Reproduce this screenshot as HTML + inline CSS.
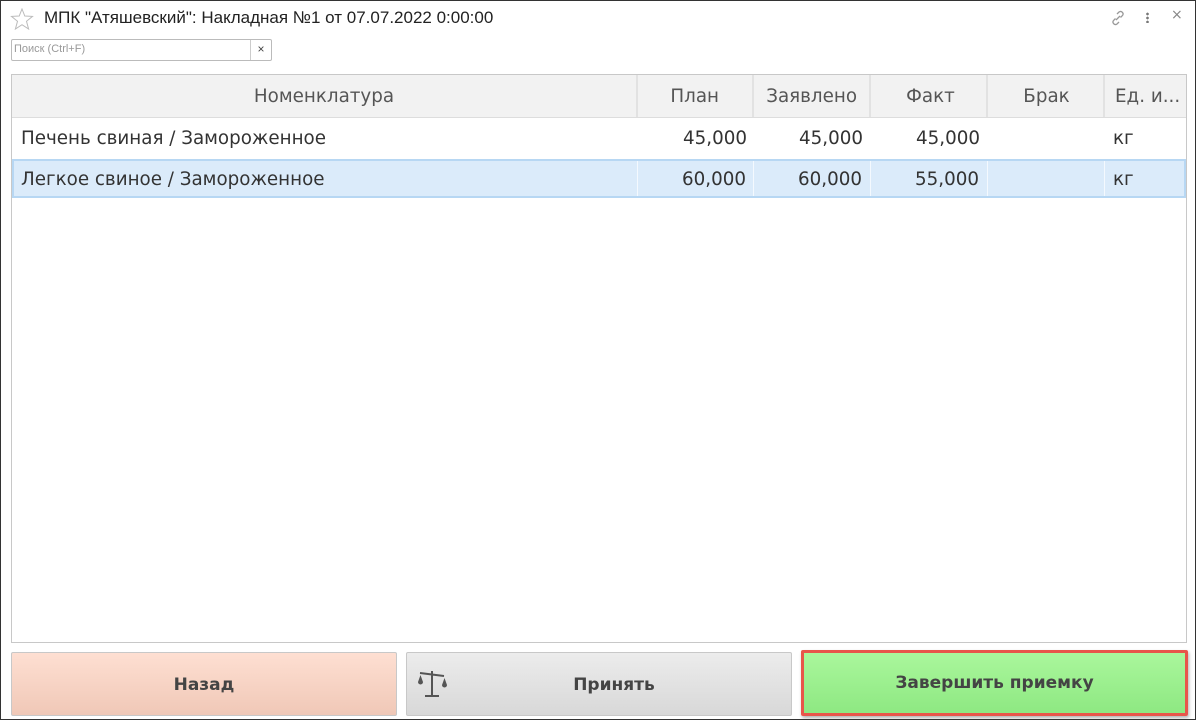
<!DOCTYPE html>
<html><head><meta charset="utf-8"><style>
*{box-sizing:border-box;margin:0;padding:0}
body{width:1196px;height:720px;background:#fff;position:relative;overflow:hidden;font-family:"DejaVu Sans","Liberation Sans",sans-serif}
.frame{position:absolute;left:0;top:0;width:1196px;height:720px;border:1px solid #333;pointer-events:none}
.title{position:absolute;left:44px;top:8px;font:17px "Liberation Sans",sans-serif;color:#222}
.search{position:absolute;left:11px;top:39px;width:261px;height:22px;border:1px solid #bbb;border-radius:2px;font:11px "Liberation Sans",sans-serif;color:#999;padding:3px 2px}
.search .x{position:absolute;right:0;top:0;width:21px;height:20px;border-left:1px solid #ccc;color:#444;text-align:center;font-size:12px;line-height:19px}
.tbl{position:absolute;left:11px;top:74px;width:1176px;height:569px;border:1px solid #c8c8c8}
.row{position:absolute;left:0;width:1174px}
.c{position:absolute;top:0;height:100%;font-size:18.3px;white-space:nowrap}
.hdr{top:0;height:43px;background:#f2f2f2;border-bottom:1px solid #ddd;color:#555}
.hdr .c{border-right:2px solid #e2e2e2;line-height:43px}
.r1{top:43px;height:41px;color:#333}
.r2{top:84px;height:39px;background:#dbebfa;border:2px solid #b7d7f3;color:#333;left:0}
.r2 .c{border-right:1px solid #f4f9fe}
.c{line-height:42px}
.btn{position:absolute;top:652px;height:64px;border:1px solid #c8c8c8;border-radius:2px;font-weight:bold;font-size:17px;color:#444;text-align:center;line-height:64px}
</style></head><body>
<svg style="position:absolute;left:10px;top:8px" width="24" height="22" viewBox="0 0 24 22"><polygon points="12,1 14.8,8 22.5,8.4 16.5,13.3 18.6,21 12,16.7 5.4,21 7.5,13.3 1.5,8.4 9.2,8" fill="none" stroke="#bbb" stroke-width="1"/></svg>
<div class="title">МПК "Атяшевский": Накладная №1 от 07.07.2022 0:00:00</div>
<svg style="position:absolute;left:1110px;top:10px" width="16" height="16" viewBox="0 0 16 16" fill="none" stroke="#999" stroke-width="1.3"><path d="M7 4l2-2a2.5 2.5 0 013.5 3.5l-2 2M9 12l-2 2A2.5 2.5 0 013.5 10.5l2-2M6 10l4-4"/></svg>
<div style="position:absolute;left:1146px;top:12px;width:3px;height:11px;background:radial-gradient(circle,#777 1.2px,transparent 1.5px) 0 0/3px 4px"></div>
<div style="position:absolute;left:1171px;top:7px;color:#888;font-size:14px">×</div>
<div class="search">Поиск (Ctrl+F)<div class="x">×</div></div>
<div class="tbl">
<div class="row hdr">
<div class="c" style="left:0;width:626px;text-align:center">Номенклатура</div>
<div class="c" style="left:626px;width:116px;text-align:right;padding-right:33px">План</div>
<div class="c" style="left:742px;width:117px;text-align:right;padding-right:12px">Заявлено</div>
<div class="c" style="left:859px;width:117px;text-align:center;padding-left:4px">Факт</div>
<div class="c" style="left:976px;width:117px;text-align:center;padding-left:2px">Брак</div>
<div class="c" style="left:1093px;width:81px;padding-left:10px;border-right:none">Ед. и...</div>
</div>
<div class="row r1">
<div class="c" style="left:9px">Печень свиная / Замороженное</div>
<div class="c" style="left:626px;width:116px;text-align:right;padding-right:7px">45,000</div>
<div class="c" style="left:742px;width:117px;text-align:right;padding-right:8px">45,000</div>
<div class="c" style="left:859px;width:117px;text-align:right;padding-right:8px">45,000</div>
<div class="c" style="left:1101px">кг</div>
</div>
<div class="row r2">
<div class="c" style="left:0;width:624px;padding-left:7px;line-height:38px">Легкое свиное / Замороженное</div>
<div class="c" style="left:624px;width:116px;text-align:right;padding-right:7px;line-height:38px">60,000</div>
<div class="c" style="left:740px;width:117px;text-align:right;padding-right:8px;line-height:38px">60,000</div>
<div class="c" style="left:857px;width:117px;text-align:right;padding-right:8px;line-height:38px">55,000</div>
<div class="c" style="left:974px;width:117px;line-height:38px"></div>
<div class="c" style="left:1099px;border:none;line-height:38px">кг</div>
</div>
</div>
<div class="btn" style="left:11px;width:386px;background:linear-gradient(#fedfd2,#f0c8b7)">Назад</div>
<div class="btn" style="left:406px;width:386px;background:linear-gradient(#ececec,#d8d8d8);padding-left:30px">Принять
<svg style="position:absolute;left:9px;top:14px" width="34" height="34" viewBox="0 0 34 34"><path d="M16 4v24M9 29h14M4 6l24 3" stroke="#555" stroke-width="2" fill="none"/><path d="M2 15l2.5-7 2.5 7a2.5 2.5 0 01-5 0z M26 18l2.5-7 2.5 7a2.5 2.5 0 01-5 0z" fill="#555"/></svg></div>
<div class="btn" style="left:801px;width:387px;top:650px;height:66px;border:3px solid #e8554a;background:linear-gradient(#aaf79c,#8ee882);box-shadow:1px 2px 3px rgba(0,0,0,.3);line-height:60px">Завершить приемку</div>
<div class="frame"></div>
</body></html>
